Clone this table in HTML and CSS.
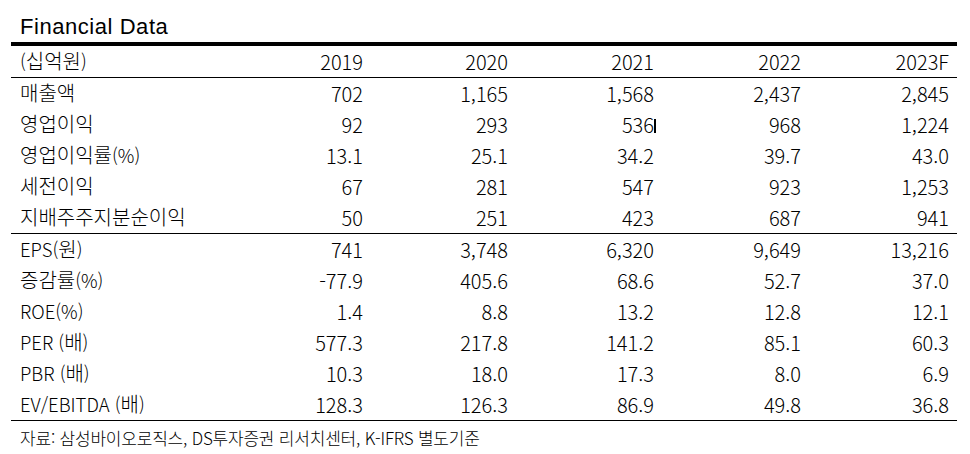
FILE: index.html
```html
<!DOCTYPE html>
<html lang="ko">
<head>
<meta charset="utf-8">
<title>Financial Data</title>
<link rel="stylesheet" href="styles.css">
</head>
<body>
<div class="page">
  <h1 class="title">Financial Data</h1>
  <table class="fin">
    <colgroup>
      <col class="c-label">
      <col class="c-145">
      <col class="c-145">
      <col class="c-146">
      <col class="c-147">
      <col class="c-148">
    </colgroup>
    <thead>
      <tr><th class="lbl">(<span class="hg">십억원</span>)</th><th>2019</th><th>2020</th><th>2021</th><th>2022</th><th>2023F</th></tr>
    </thead>
    <tbody class="grp">
      <tr><td class="lbl"><span class="hg">매출액</span></td><td>702</td><td>1,165</td><td>1,568</td><td>2,437</td><td>2,845</td></tr>
      <tr><td class="lbl"><span class="hg">영업이익</span></td><td>92</td><td>293</td><td class="has-caret">536<span class="caret"></span></td><td>968</td><td>1,224</td></tr>
      <tr><td class="lbl"><span class="hg">영업이익률</span>(%)</td><td>13.1</td><td>25.1</td><td>34.2</td><td>39.7</td><td>43.0</td></tr>
      <tr><td class="lbl"><span class="hg">세전이익</span></td><td>67</td><td>281</td><td>547</td><td>923</td><td>1,253</td></tr>
      <tr><td class="lbl"><span class="hg">지배주주지분순이익</span></td><td>50</td><td>251</td><td>423</td><td>687</td><td>941</td></tr>
    </tbody>
    <tbody class="grp">
      <tr><td class="lbl">EPS(<span class="hg">원</span>)</td><td>741</td><td>3,748</td><td>6,320</td><td>9,649</td><td>13,216</td></tr>
      <tr><td class="lbl"><span class="hg">증감률</span>(%)</td><td>-77.9</td><td>405.6</td><td>68.6</td><td>52.7</td><td>37.0</td></tr>
      <tr><td class="lbl">ROE(%)</td><td>1.4</td><td>8.8</td><td>13.2</td><td>12.8</td><td>12.1</td></tr>
      <tr><td class="lbl">PER (<span class="hg">배</span>)</td><td>577.3</td><td>217.8</td><td>141.2</td><td>85.1</td><td>60.3</td></tr>
      <tr><td class="lbl">PBR (<span class="hg">배</span>)</td><td>10.3</td><td>18.0</td><td>17.3</td><td>8.0</td><td>6.9</td></tr>
      <tr><td class="lbl">EV/EBITDA (<span class="hg">배</span>)</td><td>128.3</td><td>126.3</td><td>86.9</td><td>49.8</td><td>36.8</td></tr>
    </tbody>
  </table>
  <p class="source">자료: 삼성바이오로직스, DS투자증권 리서치센터, K-IFRS 별도기준</p>
</div>
</body>
</html>
```

FILE: styles.css
```css
html, body {
  margin: 0;
  padding: 0;
  background: #ffffff;
}

.page {
  padding: 14px 0 0 0;
  color: #000000;
}

.title {
  margin: 0 0 2px 20px;
  font-family: "Liberation Sans", Arial, sans-serif;
  font-weight: normal;
  font-size: 22px;
  line-height: 26px;
  letter-spacing: 0.55px;
}

.fin {
  margin-left: 11px;
  width: 946px;
  border-collapse: collapse;
  table-layout: fixed;
  border-top: 4px solid #000000;
  font-family: "Noto Sans CJK KR", "Noto Sans", sans-serif;
  font-size: 20px;
  font-weight: 300;
  color: #000000;
}

.c-label { width: 215px; }
.c-145 { width: 145px; }
.c-146 { width: 146px; }
.c-147 { width: 147px; }
.c-148 { width: 148px; }

.fin th,
.fin td {
  padding: 0 8px 0 0;
  height: 31px;
  line-height: 31px;
  text-align: right;
  font-weight: 300;
  vertical-align: middle;
  white-space: nowrap;
}

.fin thead th {
  border-bottom: 1px solid #000000;
}

.fin .lbl {
  text-align: left;
  padding: 0 0 0 9px;
  font-size: 18.5px;
}

.fin .lbl .hg {
  font-size: 20px;
  line-height: 18px;
}

.grp tr:last-child td {
  border-bottom: 1px solid #000000;
}

.has-caret {
  position: relative;
}

.caret {
  position: absolute;
  right: 6px;
  top: 10px;
  width: 2px;
  height: 14px;
  background: #000000;
}

.source {
  margin: 7px 0 0 20px;
  font-family: "Noto Sans CJK KR", "Noto Sans", sans-serif;
  font-size: 17px;
  font-weight: 300;
  line-height: 20px;
  letter-spacing: -0.2px;
}
```
